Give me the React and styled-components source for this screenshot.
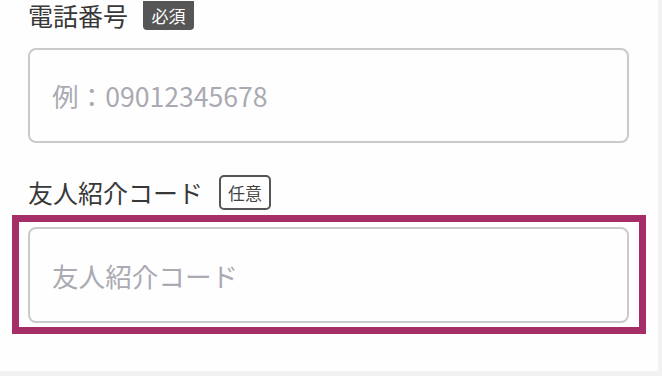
import React from 'react';
import styled, { createGlobalStyle } from 'styled-components';

const GlobalStyle = createGlobalStyle`
  html, body {
    margin: 0;
    padding: 0;
    background: #f2f2f2;
    font-family: "Noto Sans CJK JP", "Noto Sans", sans-serif;
  }
`;

const Card = styled.div`
  width: 658px;
  height: 371px;
  box-sizing: border-box;
  background: #fefefe;
  padding-left: 28px;
  overflow: hidden;
`;

const Field = styled.div`
  margin-top: ${(p) => p.$top}px;
`;

const LabelRow = styled.div`
  display: flex;
  align-items: center;
  height: ${(p) => p.$height}px;
`;

const LabelText = styled.span`
  font-size: 25px;
  line-height: 1;
  color: #383838;
`;

const Badge = styled.span`
  display: inline-flex;
  align-items: center;
  justify-content: center;
  box-sizing: border-box;
  margin-left: ${(p) => p.$gap}px;
  font-size: 17px;
  line-height: 1;
  ${(p) =>
    p.$required
      ? `
    width: 51px;
    height: 29px;
    background: #565656;
    color: #fff;
    border-radius: 0 0 4px 4px;
  `
      : `
    width: 52px;
    height: 35px;
    border: 2px solid #555;
    color: #444;
    border-radius: 5px;
  `}
`;

const Input = styled.input`
  display: block;
  box-sizing: border-box;
  width: 601px;
  height: ${(p) => p.$height}px;
  margin-top: ${(p) => p.$top || 0}px;
  padding: 0 0 0 22px;
  border: 2px solid #cacaca;
  border-radius: 8px;
  background: #fefefe;
  font-family: inherit;
  font-size: 26.6px;
  color: #333;
  outline: none;

  &::placeholder {
    color: #aaaab2;
  }
`;

const Highlight = styled.div`
  box-sizing: border-box;
  width: 634px;
  height: 119px;
  margin: 5px 0 0 -16px;
  padding: 5px 0 0 9px;
  border: 7px solid #a62e68;
  background: #fff;
`;

export default function App() {
  return (
    <>
      <GlobalStyle />
      <Card>
        <Field $top={0}>
          <LabelRow $height={30}>
            <LabelText>電話番号</LabelText>
            <Badge $required $gap={15}>必須</Badge>
          </LabelRow>
          <Input $top={18} $height={95} placeholder="例：09012345678" />
        </Field>
        <Field $top={31}>
          <LabelRow $height={36}>
            <LabelText>友人紹介コード</LabelText>
            <Badge $gap={16}>任意</Badge>
          </LabelRow>
          <Highlight>
            <Input $height={96} placeholder="友人紹介コード" />
          </Highlight>
        </Field>
      </Card>
    </>
  );
}
